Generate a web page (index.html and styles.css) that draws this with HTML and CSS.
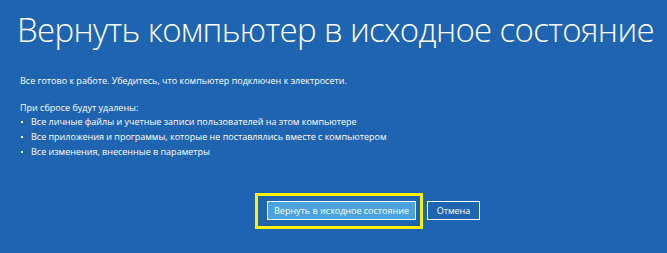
FILE: index.html
```html
<!DOCTYPE html>
<html lang="ru">
<head>
    <meta charset="UTF-8">
    <title>Вернуть компьютер в исходное состояние</title>
    <link rel="stylesheet" href="styles.css">
</head>
<body>
    <div class="screen">
        <h1 class="title">Вернуть компьютер в исходное состояние</h1>
        <div class="content">
            <p class="intro">Все готово к работе. Убедитесь, что компьютер подключен к электросети.</p>
            <p class="list-head">При сбросе будут удалены:</p>
            <ul class="items">
                <li>Все личные файлы и учетные записи пользователей на этом компьютере</li>
                <li>Все приложения и программы, которые не поставлялись вместе с компьютером</li>
                <li>Все изменения, внесенные в параметры</li>
            </ul>
        </div>
        <div class="actions">
            <span class="marker">
                <button class="btn btn-primary">Вернуть в исходное состояние</button>
            </span>
            <button class="btn">Отмена</button>
        </div>
    </div>
</body>
</html>
```

FILE: styles.css
```css
html, body {
    margin: 0;
    height: 100%;
}

body {
    background-color: #1f64b0;
    color: #ffffff;
    font-family: "Open Sans", "Noto Sans", sans-serif;
}

.screen {
    height: 253px;
    overflow: hidden;
}

.title {
    margin: 0;
    padding: 8px 0 0 17px;
    font-size: 33px;
    font-weight: 300;
    line-height: 44px;
    letter-spacing: -0.65px;
    white-space: nowrap;
}

.content {
    padding: 22px 0 0 20px;
    font-size: 9px;
    line-height: 14.7px;
}

.intro {
    margin: 0 0 12px 0;
}

.list-head {
    margin: 0;
}

.items {
    margin: 0;
    padding: 0;
    list-style: none;
}

.items li {
    position: relative;
    padding-left: 11px;
}

.items li::before {
    content: "";
    position: absolute;
    left: 1px;
    top: 6px;
    width: 2px;
    height: 2px;
    background-color: #ffffff;
}

.actions {
    display: flex;
    align-items: center;
    gap: 4px;
    padding: 33px 0 0 255px;
}

.marker {
    display: flex;
    padding: 5px 4px 6px 9px;
    border: 3px solid #fff200;
}

.btn {
    box-sizing: border-box;
    height: 19px;
    padding: 0;
    border: 1px solid #ffffff;
    background-color: transparent;
    color: #ffffff;
    font-family: "Open Sans", "Noto Sans", sans-serif;
    font-size: 9px;
    line-height: 17px;
    white-space: nowrap;
    cursor: pointer;
}

.btn-primary {
    width: 149px;
    background-color: #4aa3de;
}

.actions > .btn {
    width: 53px;
}
```
